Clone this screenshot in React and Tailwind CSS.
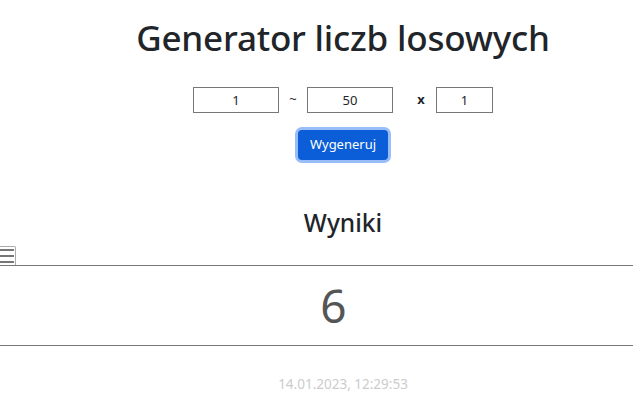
export default function App() {
  const font = { fontFamily: '"Noto Sans", "Open Sans", sans-serif' };
  return (
    <div className="w-[633px] h-[406px] bg-white overflow-hidden text-[#212529]" style={font}>
      <div className="pl-[53px] flex flex-col items-center">
        <h1 className="mt-[14px] text-[35px] leading-[48px] font-medium tracking-[-0.2px]">Generator liczb losowych</h1>
        <div className="mt-[25px] flex items-center h-[26px] text-[13px]">
          <input readOnly value="1" className="w-[86px] h-[26px] border border-[#767676] text-center outline-none" />
          <span className="w-[28px] text-center">~</span>
          <input readOnly value="50" className="w-[86px] h-[26px] border border-[#767676] text-center outline-none" />
          <span className="w-[43px] text-center font-bold pl-[19px] pr-[6px]">x</span>
          <input readOnly value="1" className="w-[57px] h-[26px] border border-[#767676] text-center outline-none" />
        </div>
        <button className="mt-[17px] w-[90px] h-[30px] rounded-[4px] bg-[#0b5ed7] text-white text-[13px] ring-[3px] ring-[#98bdf8]">Wygeneruj</button>
        <h2 className="mt-[47px] text-[24.5px] leading-[32px] font-medium">Wyniki</h2>
      </div>
      <div className="mt-[7px] h-[19px] w-[16px] border-t border-r border-[#aaa] rounded-tr-[2px] flex flex-col justify-center gap-[4px] pr-[1px]">
        <div className="h-[2px] bg-[#777]" />
        <div className="h-[2px] bg-[#777]" />
        <div className="h-[2px] bg-[#777]" />
      </div>
      <div className="h-[1px] bg-[#777]" />
      <div className="h-[79px] flex items-center justify-center pl-[34px] text-[46px] text-[#555]">6</div>
      <div className="h-[1px] bg-[#777]" />
      <div className="pl-[53px] mt-[28px] text-center text-[13.5px] text-[#ccc]">14.01.2023, 12:29:53</div>
    </div>
  );
}
